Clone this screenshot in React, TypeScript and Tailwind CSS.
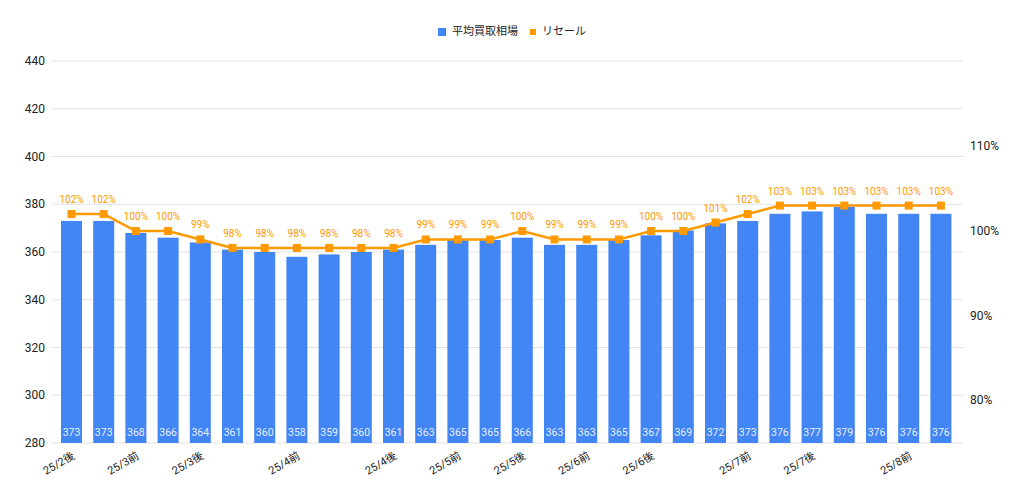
const bars = [373,373,368,366,364,361,360,358,359,360,361,363,365,365,366,363,363,365,367,369,372,373,376,377,379,376,376,376];
const pct = [102,102,100,100,99,98,98,98,98,98,98,99,99,99,100,99,99,99,100,100,101,102,103,103,103,103,103,103];
const xl: Record<number, string> = {0:'25/2後',2:'25/3前',4:'25/3後',7:'25/4前',10:'25/4後',12:'25/5前',14:'25/5後',16:'25/6前',18:'25/6後',21:'25/7前',23:'25/7後',26:'25/8前'};

const yv = (v: number) => 443 - (v - 280) * 2.3875;
const yp = (p: number) => 231 - (p - 100) * 8.47;
const cx = (i: number) => 71.5 + i * 32.2;

export default function App() {
  const font = '"Roboto", "Noto Sans CJK JP", sans-serif';
  return (
    <div className="relative w-[1024px] h-[496px] bg-white" style={{ fontFamily: font }}>
      <div className="absolute top-[24px] left-0 w-full flex justify-center items-center gap-3 text-[11px] text-[#222]">
        <div className="flex items-center gap-1.5"><span className="w-[8px] h-[8px] bg-[#4285f4]" />平均買取相場</div>
        <div className="flex items-center gap-1.5"><span className="w-[6px] h-[6px] bg-[#ff9900]" />リセール</div>
      </div>
      <svg width="1024" height="496" className="block" style={{ fontFamily: font }}>
        {[280,300,320,340,360,380,400,420,440].map(v => (
          <g key={v}>
            <line x1={52} x2={963} y1={yv(v)} y2={yv(v)} stroke="#e3e3e3" strokeWidth={1} />
            <text x={45} y={yv(v) + 4} textAnchor="end" fontSize={12} fill="#222">{v}</text>
          </g>
        ))}
        {[110,100,90,80].map(p => (
          <text key={p} x={970} y={yp(p) + 4} fontSize={12} fill="#222">{p}%</text>
        ))}
        {bars.map((b, i) => (
          <g key={i}>
            <rect x={cx(i) - 10.5} y={yv(b)} width={21} height={443 - yv(b)} fill="#4285f4" />
            <text x={cx(i)} y={436} textAnchor="middle" fontSize={10.5} fill="#e6efff">{b}</text>
          </g>
        ))}
        <polyline points={pct.map((p, i) => `${cx(i)},${yp(p)}`).join(' ')} fill="none" stroke="#ff9900" strokeWidth={2.5} />
        {pct.map((p, i) => (
          <g key={i}>
            <rect x={cx(i) - 4} y={yp(p) - 4} width={8} height={8} fill="#ff9900" />
            <text x={cx(i)} y={yp(p) - 11} textAnchor="middle" fontSize={10} fill="#ff9900">{p}%</text>
          </g>
        ))}
        {Object.entries(xl).map(([k, t]) => {
          const x = cx(Number(k)) + 4;
          return (
            <text key={k} x={x} y={458} textAnchor="end" fontSize={11} fill="#222" transform={`rotate(-30 ${x} 458)`}>{t}</text>
          );
        })}
      </svg>
    </div>
  );
}
